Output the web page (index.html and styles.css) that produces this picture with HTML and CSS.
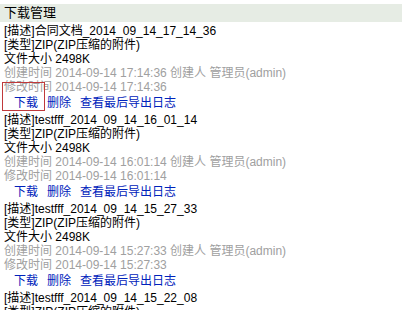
FILE: index.html
```html
<!DOCTYPE html>
<html lang="zh-CN">
<head>
  <meta charset="UTF-8" />
  <title>下载管理</title>
  <link rel="stylesheet" href="styles.css">
</head>
<body>
  <div class="title">下载管理</div>

  <div class="item">
    <div class="line">[描述]合同文档_2014_09_14_17_14_36</div>
    <div class="line">[类型]ZIP(ZIP压缩的附件)</div>
    <div class="line">文件大小 2498K</div>
    <div class="line gray">创建时间 2014-09-14 17:14:36 创建人 管理员(admin)</div>
    <div class="line gray">修改时间 2014-09-14 17:14:36</div>
    <div class="ops">
      <a href="#" class="marked">下载</a><a href="#">删除</a><a href="#">查看最后导出日志</a>
    </div>
  </div>

  <div class="item">
    <div class="line">[描述]testfff_2014_09_14_16_01_14</div>
    <div class="line">[类型]ZIP(ZIP压缩的附件)</div>
    <div class="line">文件大小 2498K</div>
    <div class="line gray">创建时间 2014-09-14 16:01:14 创建人 管理员(admin)</div>
    <div class="line gray">修改时间 2014-09-14 16:01:14</div>
    <div class="ops">
      <a href="#">下载</a><a href="#">删除</a><a href="#">查看最后导出日志</a>
    </div>
  </div>

  <div class="item">
    <div class="line">[描述]testfff_2014_09_14_15_27_33</div>
    <div class="line">[类型]ZIP(ZIP压缩的附件)</div>
    <div class="line">文件大小 2498K</div>
    <div class="line gray">创建时间 2014-09-14 15:27:33 创建人 管理员(admin)</div>
    <div class="line gray">修改时间 2014-09-14 15:27:33</div>
    <div class="ops">
      <a href="#">下载</a><a href="#">删除</a><a href="#">查看最后导出日志</a>
    </div>
  </div>

  <div class="item">
    <div class="line">[描述]testfff_2014_09_14_15_22_08</div>
    <div class="line">[类型]ZIP(ZIP压缩的附件)</div>
  </div>
</body>
</html>
```

FILE: styles.css
```css
body {
  margin: 0;
  padding-top: 4px;
  font-family: "Liberation Sans", "Noto Sans CJK SC", sans-serif;
  font-size: 12px;
  color: #000;
  background: #fff;
}
.title {
  background-color: #e6ece4;
  height: 18px;
  line-height: 18px;
  font-size: 13px;
  padding-left: 4px;
  margin-bottom: 2px;
}
.item {
  padding-left: 4px;
}
.line {
  height: 14px;
  line-height: 14px;
  white-space: nowrap;
}
.gray {
  color: #a0a0a0;
}
.ops {
  height: 19px;
  line-height: 19px;
  padding-left: 10px;
}
.ops a {
  color: #0022bb;
  text-decoration: none;
  margin-right: 9px;
}
.marked {
  position: relative;
}
.marked::after {
  content: "";
  position: absolute;
  left: -12px;
  top: -14px;
  width: 41px;
  height: 27px;
  border: 1px solid #c0393b;
}
```
